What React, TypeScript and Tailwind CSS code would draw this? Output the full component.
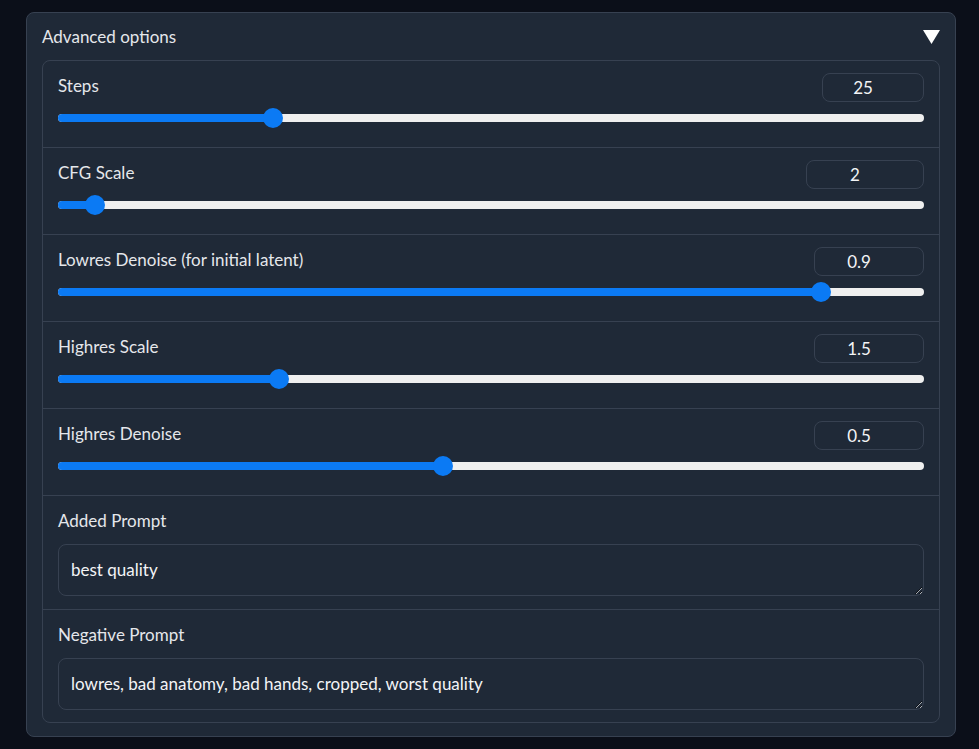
import React from "react";

const font = { fontFamily: "Lato, 'Noto Sans', sans-serif" };

type SliderRowProps = { label: string; value: string; inputW: string; frac: number };

function SliderRow({ label, value, inputW, frac }: SliderRowProps) {
  return (
    <div className="h-[87px] border-b border-[#374151] px-[15px] pt-3">
      <div className="flex items-start justify-between">
        <span className="mt-[2px] text-[17px] leading-[22px] text-[#e5e7eb]">{label}</span>
        <div
          className={`${inputW} flex h-[29px] items-center justify-center rounded-lg border border-[#374151] pr-5 text-[17px] text-[#f3f4f6]`}
        >
          {value}
        </div>
      </div>
      <div className="relative mt-3 h-[8px] rounded-full bg-[#efefef]">
        <div
          className="absolute left-0 top-0 h-full rounded-full bg-[#0b7af4]"
          style={{ width: `calc(10px + ${frac} * (100% - 20px))` }}
        />
        <div
          className="absolute top-1/2 h-[20px] w-[20px] -translate-x-1/2 -translate-y-1/2 rounded-full bg-[#0b7af4]"
          style={{ left: `calc(10px + ${frac} * (100% - 20px))` }}
        />
      </div>
    </div>
  );
}

function PromptRow({ label, value, last }: { label: string; value: string; last?: boolean }) {
  return (
    <div className={`px-[15px] pt-3 ${last ? "pb-3" : "border-b border-[#374151] pb-[13px]"}`}>
      <div className="mt-[2px] text-[17px] leading-[22px] text-[#e5e7eb]">{label}</div>
      <textarea
        readOnly
        defaultValue={value}
        rows={1}
        className="mt-[12px] block h-[52px] w-full resize-y rounded-lg border border-[#374151] bg-transparent px-3 py-[12px] text-[17px] leading-[26px] text-[#f3f4f6] outline-none"
        style={font}
      />
    </div>
  );
}

export default function App() {
  return (
    <div className="min-h-[749px] bg-[#0b0f19] pt-3" style={font}>
      <div className="ml-[26px] w-[930px] rounded-lg border border-[#374151] bg-[#1f2937] px-[15px] pb-[13px]">
        <div className="flex h-[47px] items-center justify-between">
          <span className="mt-[1px] text-[17px] text-[#e5e7eb]">Advanced options</span>
          <svg width="17" height="14" viewBox="0 0 17 14" className="mt-[1px]">
            <polygon points="0,0 17,0 8.5,14" fill="#ffffff" />
          </svg>
        </div>
        <div className="rounded-lg border border-[#374151]">
          <SliderRow label="Steps" value="25" inputW="w-[102px]" frac={0.2426} />
          <SliderRow label="CFG Scale" value="2" inputW="w-[118px]" frac={0.032} />
          <SliderRow label="Lowres Denoise (for initial latent)" value="0.9" inputW="w-[110px]" frac={0.89} />
          <SliderRow label="Highres Scale" value="1.5" inputW="w-[110px]" frac={0.2497} />
          <SliderRow label="Highres Denoise" value="0.5" inputW="w-[110px]" frac={0.4438} />
          <PromptRow label="Added Prompt" value="best quality" />
          <PromptRow label="Negative Prompt" value="lowres, bad anatomy, bad hands, cropped, worst quality" last />
        </div>
      </div>
    </div>
  );
}
